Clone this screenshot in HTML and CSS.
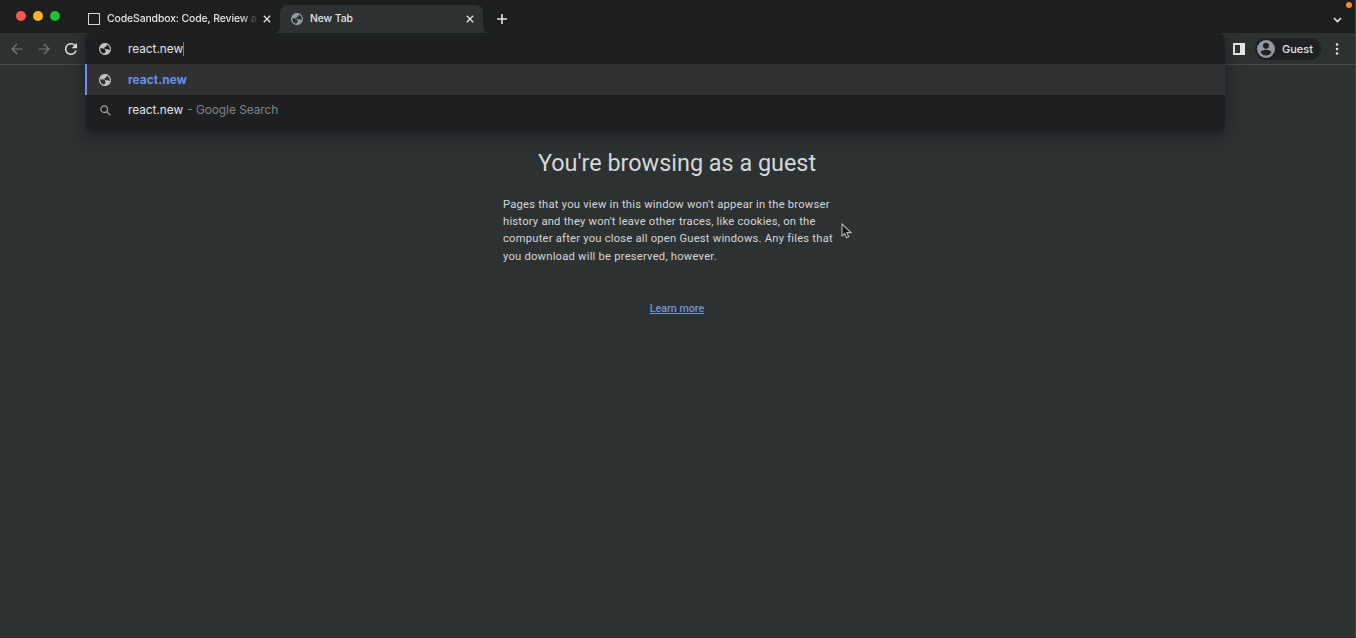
FILE: index.html
```html
<!DOCTYPE html>
<html lang="en">
<head>
<meta charset="utf-8">
<title>New Tab</title>
<link rel="stylesheet" href="styles.css">
</head>
<body>
<svg class="defs" width="0" height="0">
  <symbol id="globe" viewBox="2 2 20 20"><path d="M12 2C6.480 2 2 6.480 2 12s4.480 10 10 10 10-4.480 10-10S17.520 2 12 2zm-1 17.930c-3.950-.49-7-3.850-7-7.930 0-.4.05-.8.1-1.200L9 11c1.500 0 3 .8 3 2.500 0 1.200 1.500 1 1.500 2.300 0 1.400-2.500 1.700-2.500 4.130zM15 4.590c2.930 1.190 5 4.060 5 7.410 0 .7-.1 1.400-.3 2.100L17.500 13c-1-.6-1.500-.5-3-.5-1.800 0-3.500-.7-3.500-2.300 0-1.700 1.300-1.700 2.300-2C14.500 7.800 15 6.500 15 4.590z" fill="currentColor" fill-rule="evenodd"/></symbol>
  <symbol id="close" viewBox="0 0 8 8"><path d="M.8.8 7.200 7.200M7.200.8.8 7.200" fill="none" stroke="currentColor" stroke-width="1.300"/></symbol>
</svg>
<div class="window">
  <header class="tabstrip">
    <div class="lights"><i class="red"></i><i class="yellow"></i><i class="green"></i></div>
    <div class="tab">
      <span class="square"></span>
      <span class="title faded">CodeSandbox: Code, Review a</span>
      <svg class="close"><use href="#close"/></svg>
    </div>
    <div class="tab active">
      <svg class="globe muted"><use href="#globe"/></svg>
      <span class="title">New Tab</span>
      <svg class="close"><use href="#close"/></svg>
    </div>
    <svg class="plus" viewBox="0 0 10 10"><path d="M5 0v10M0 5h10" stroke="currentColor" stroke-width="1.600"/></svg>
    <svg class="chevron" viewBox="0 0 9 6"><path d="m1 1 3.500 3.500L8 1" fill="none" stroke="currentColor" stroke-width="1.600"/></svg>
    <span class="recording"></span>
  </header>
  <nav class="toolbar">
    <svg class="nav dim" viewBox="0 0 12 12"><path d="M11.500 6H1M6 1 1 6l5 5" fill="none" stroke="currentColor" stroke-width="1.200"/></svg>
    <svg class="nav dim" viewBox="0 0 12 12"><path d="M.5 6H11M6 1l5 5-5 5" fill="none" stroke="currentColor" stroke-width="1.200"/></svg>
    <svg class="nav" viewBox="4 4 16 16"><path d="M17.650 6.350A7.960 7.960 0 0 0 12 4a8 8 0 1 0 7.730 10h-2.080A6 6 0 1 1 12 6c1.660 0 3.140.69 4.220 1.780L13 11h7V4l-2.350 2.350z" fill="currentColor"/></svg>
    <div class="actions">
      <svg class="panel" viewBox="0 0 12 12"><path d="M0 0h12v12H0zM2 2v8h5V2z" fill="currentColor" fill-rule="evenodd"/></svg>
      <div class="profile">
        <svg class="avatar" viewBox="2 2 20 20"><path d="M12 2a10 10 0 1 0 0 20 10 10 0 0 0 0-20zm0 3a3.300 3.300 0 1 1 0 6.600A3.300 3.300 0 0 1 12 5zm0 14.200a7.200 7.200 0 0 1-6-3.220c.03-1.990 4-3.080 6-3.080s5.970 1.090 6 3.080a7.200 7.200 0 0 1-6 3.220z" fill="currentColor"/></svg>
        <span>Guest</span>
      </div>
      <svg class="menu" viewBox="0 0 4 12"><circle cx="2" cy="1.500" r="1.250"/><circle cx="2" cy="6" r="1.250"/><circle cx="2" cy="10.500" r="1.250"/></svg>
    </div>
  </nav>
  <div class="omnibox">
    <div class="row"><svg class="globe"><use href="#globe"/></svg><span>react.new</span><i class="caret"></i></div>
    <div class="row selected"><svg class="globe"><use href="#globe"/></svg><b>react.new</b></div>
    <div class="row last"><svg class="search" viewBox="0 0 11 11"><circle cx="4.200" cy="4.200" r="3.300"/><path d="m6.700 6.700 3.700 3.700"/></svg><span>react.new</span><span class="hint">- Google Search</span></div>
  </div>
  <main class="page">
    <h1>You're browsing as a guest</h1>
    <p>Pages that you view in this window won't appear in the browser<br>history and they won't leave other traces, like cookies, on the<br>computer after you close all open Guest windows. Any files that<br>you download will be preserved, however.</p>
    <a class="learn">Learn more</a>
  </main>
  <svg class="cursor" viewBox="0 0 11 16"><path d="M1 1v12l2.700-2.500 1.800 4.200 2.200-.9-1.800-4.200H10z" fill="#151515" stroke="#b4b4b4" stroke-width="1.100"/></svg>
</div>
</body>
</html>
```

FILE: styles.css
```css
* { box-sizing: border-box; }
body { margin: 0; background: #2c3131; }
svg { display: block; flex: none; }
.defs { position: absolute; }
.window { position: relative; height: 638px; overflow: hidden; background: #2c3131; border-right: 1px solid #454949; border-bottom: 1px solid #232727; font-family: Inter, "Liberation Sans", sans-serif; color: #e4e5e6; }
.tabstrip { position: relative; display: flex; align-items: center; height: 33px; padding-top: 5px; background: #1d1e1f; }
.lights { display: flex; gap: 7px; width: 60px; padding-left: 16px; margin-top: -6px; }
.lights i { flex: none; width: 10px; height: 10px; border-radius: 50%; }
.red { background: #ff564f; }
.yellow { background: #fdb525; }
.green { background: #20c235; }
.tab { display: flex; align-items: center; height: 28px; width: 220px; padding: 0 9px 0 28px; }
.tab.active { position: relative; width: 203px; padding: 0 9px 0 11px; background: #2c3131; border-radius: 7px 7px 0 0; }
.active::before, .active::after { content: ""; position: absolute; bottom: 0; width: 6px; height: 6px; }
.active::before { left: -6px; background: radial-gradient(circle at 0 0, transparent 5.500px, #2c3131 6px); }
.active::after { right: -6px; background: radial-gradient(circle at 100% 0, transparent 5.500px, #2c3131 6px); }
.square { flex: none; width: 12px; height: 12px; border: 1px solid #d8d8d8; margin-right: 7px; }
.title { flex: 1; white-space: nowrap; font-size: 10.400px; font-weight: 500; line-height: 16px; letter-spacing: -.1px; }
.faded { max-width: 150px; -webkit-mask-image: linear-gradient(90deg, #000 134px, transparent 151px); mask-image: linear-gradient(90deg, #000 134px, transparent 151px); }
.close { width: 8px; height: 8px; margin-left: auto; }
.globe { width: 12px; height: 12px; color: #c0c1c2; }
.globe.muted { color: #9299a0; margin-right: 7px; }
.plus { width: 10px; height: 10px; margin-left: 14px; }
.chevron { width: 9px; height: 6px; margin: 1px 13px 0 auto; }
.recording { position: absolute; top: 2px; right: 3px; width: 6px; height: 6px; border-radius: 50%; background: #ee911f; }
.toolbar { display: flex; align-items: center; gap: 15px; height: 32px; padding: 0 16px 0 11px; border-bottom: 1px solid #454a4a; }
.nav { width: 12px; height: 12px; }
.dim { color: #777b7b; }
.actions { display: flex; align-items: center; margin-left: auto; }
.panel { width: 12px; height: 12px; }
.profile { display: flex; align-items: center; gap: 7px; width: 66px; height: 22px; margin: 0 14px 0 10px; padding-left: 2px; border-radius: 11px; background: #1e2021; font-size: 11px; font-weight: 500; }
.avatar { width: 18px; height: 18px; color: #8f999f; }
.menu { width: 4px; height: 12px; fill: currentColor; }
.omnibox { position: absolute; z-index: 2; top: 33px; left: 85px; width: 1140px; height: 99px; border-radius: 7px; background: #1e1f20; box-shadow: 0 5px 14px rgba(22, 25, 30, .65); font-size: 11.800px; clip-path: inset(0 -20px -30px -20px); }
.row { display: flex; align-items: center; height: 31px; padding-left: 14px; white-space: nowrap; }
.row svg { margin-right: 17px; }
.row.last { height: 30px; }
.selected { height: 31px; padding-left: 12px; border-left: 2px solid #6392e8; background: #303133; color: #6495ed; }
.selected b { font-weight: 700; letter-spacing: .1px; }
.caret { width: 1px; height: 14px; background: #77797a; }
.search { width: 11px; height: 11px; margin-left: 1px; fill: none; stroke: #9a9c9d; stroke-width: 1.300; }
.hint { margin-left: 4px; color: #828486; }
.page { display: flex; flex-direction: column; align-items: center; padding-top: 84px; font-family: Roboto, sans-serif; color: #d5d8d9; }
h1 { margin: 0 1px 0 0; font-size: 23.400px; font-weight: 400; line-height: 28px; white-space: nowrap; }
p { width: 349px; margin: 18.700px 0 0; font-size: 11.200px; line-height: 17.330px; letter-spacing: .23px; white-space: nowrap; }
.learn { margin: 36.300px 1px 0 0; font-size: 10.700px; line-height: 16px; font-weight: 500; color: #6f96d8; text-decoration: underline; }
.cursor { position: absolute; z-index: 3; left: 841px; top: 223px; width: 11px; height: 16px; }
```
